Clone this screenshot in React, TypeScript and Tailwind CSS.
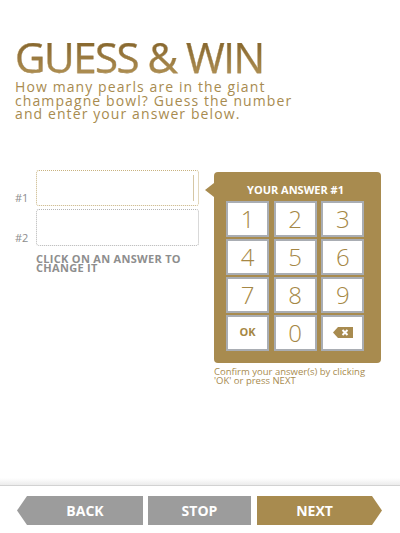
import React from 'react';

const gold = 'text-[#a58745]';

function Key({ children }: { children: React.ReactNode }) {
  return (
    <button className="flex h-[36px] w-[43px] items-center justify-center border-2 border-[#a9adb3] bg-white">
      {children}
    </button>
  );
}

function BackspaceIcon() {
  return (
    <svg width="20" height="11" viewBox="0 0 20 11">
      <path d="M5 0H20V11H5L0 5.5Z" fill="#a88b4f" />
      <path d="M9.5 3L14.5 8M14.5 3L9.5 8" stroke="#fff" strokeWidth="2" />
    </svg>
  );
}

export default function App() {
  const digits = ['1', '2', '3', '4', '5', '6', '7', '8', '9'];

  return (
    <div className="flex h-[533px] w-[400px] flex-col bg-white font-['Open_Sans',sans-serif]">
      {/* Heading */}
      <div className="px-[15px] pt-[36px]">
        <h1 className="bg-gradient-to-b from-[#7f5f25] to-[#b39457] bg-clip-text text-[42px] font-normal leading-[42px] tracking-[-1.5px] text-transparent [-webkit-text-stroke:0.25px_#94743a]">
          GUESS &amp; WIN
        </h1>
        <p className="mt-[2px] text-[14px] leading-[13.5px] tracking-[1.1px] text-[#a88b4f]">
          How many pearls are in the giant
          <br />
          champagne bowl? Guess the number
          <br />
          and enter your answer below.
        </p>
      </div>

      {/* Answers + keypad */}
      <div className="mt-[49px] flex px-[15px]">
        <div className="flex flex-col">
          <div className="flex items-end">
            <span className="w-[21px] pb-[3px] text-[11px] leading-none text-[#8d8d8d]">#1</span>
            <div className="flex h-[36px] w-[163px] justify-end rounded-[3px] border border-dotted border-[#c8b27f] p-[4px]">
              <div className="w-[1px] bg-[#d6c7a5]" />
            </div>
          </div>
          <div className="mt-[3px] flex items-end">
            <span className="w-[21px] pb-[3px] text-[11px] leading-none text-[#8d8d8d]">#2</span>
            <div className="h-[37px] w-[163px] rounded-[3px] border border-dotted border-[#b4b4b4]" />
          </div>
          <p className="ml-[21px] mt-[8px] text-[11px] font-bold uppercase leading-[9.5px] tracking-[0.3px] text-[#8e8e8e]">
            Click on an answer to
            <br />
            change it
          </p>
        </div>

        <div className="ml-[15px] mt-[2px] flex flex-col">
          <div className="relative h-[191px] w-[167px] rounded-[4px] bg-[#a88b4f] pl-[12px] pr-[16px] pt-[12px]">
            <div className="absolute left-[-9px] top-[11px] h-0 w-0 border-y-[7px] border-r-[9px] border-y-transparent border-r-[#a88b4f]" />
            <div className="text-center text-[11px] font-bold leading-[12px] text-white">YOUR ANSWER #1</div>
            <div className="mt-[5px] grid grid-cols-3 gap-x-[4px] gap-y-[2px]">
              {digits.map((d) => (
                <Key key={d}>
                  <span className={`text-[24px] font-light leading-none ${gold}`}>{d}</span>
                </Key>
              ))}
              <Key>
                <span className={`text-[11px] font-bold ${gold}`}>OK</span>
              </Key>
              <Key>
                <span className={`text-[24px] font-light leading-none ${gold}`}>0</span>
              </Key>
              <Key>
                <BackspaceIcon />
              </Key>
            </div>
          </div>
          <p className="mt-[4px] text-[9.5px] leading-[9px] text-[#a88b4f]">
            Confirm your answer(s) by clicking
            <br />
            'OK' or press NEXT
          </p>
        </div>
      </div>

      {/* Footer navigation */}
      <div className="mt-auto">
        <div className="h-[7px] bg-gradient-to-b from-transparent to-[#ececec]" />
        <div className="h-[1px] bg-[#d2d2d2]" />
        <div className="flex gap-x-[5px] pb-[8px] pl-[17px] pt-[10px]">
          <button className="flex h-[29px] w-[126px] items-center justify-center bg-[#9c9c9c] pl-[10px] text-[14px] font-bold text-white [clip-path:polygon(10px_0,100%_0,100%_100%,10px_100%,0_50%)]">
            BACK
          </button>
          <button className="flex h-[29px] w-[103px] items-center justify-center bg-[#9c9c9c] text-[14px] font-bold text-white">
            STOP
          </button>
          <button className="ml-[1px] flex h-[29px] w-[125px] items-center justify-center bg-[#a88b4f] pr-[10px] text-[14px] font-bold text-white [clip-path:polygon(0_0,calc(100%_-_10px)_0,100%_50%,calc(100%_-_10px)_100%,0_100%)]">
            NEXT
          </button>
        </div>
      </div>
    </div>
  );
}
